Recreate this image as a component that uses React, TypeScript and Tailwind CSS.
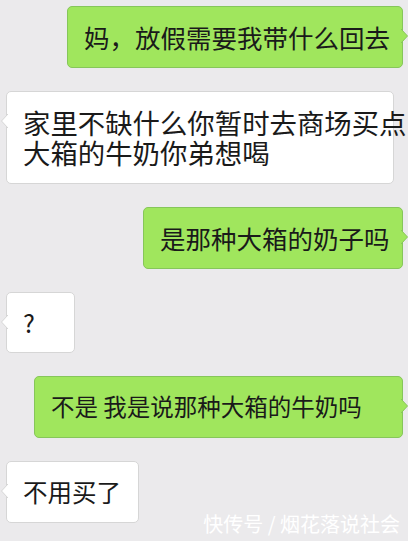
import React from "react";

type Side = "left" | "right";

const Tail = ({ side }: { side: Side }) => {
  return (
    <svg
      width="7"
      height="14"
      viewBox="0 0 7 14"
      className={
        side === "right"
          ? "absolute top-[22px] right-[-6px]"
          : "absolute top-[22px] left-[-6px]"
      }
    >
      {side === "right" ? (
        <path d="M0 0 L6.5 7 L0 14" fill="#a0e65d" stroke="#86c65a" strokeWidth="1" />
      ) : (
        <path d="M7 0 L0.5 7 L7 14" fill="#ffffff" stroke="#d6d6d6" strokeWidth="1" />
      )}
    </svg>
  );
};

const Bubble = ({
  side,
  className,
  children,
}: {
  side: Side;
  className: string;
  children: React.ReactNode;
}) => {
  const base =
    side === "right"
      ? "self-end mr-[5px] bg-[#a0e65d] border-[#86c65a]"
      : "self-start ml-[6px] bg-white border-[#d6d6d6]";
  return (
    <div
      className={`relative whitespace-nowrap rounded-[5px] border pl-4 text-[#1a1a1a] ${base} ${className}`}
    >
      {children}
      <Tail side={side} />
    </div>
  );
};

const App = () => {
  return (
    <div
      className="relative h-[541px] w-[408px] overflow-hidden bg-[#ebeaec]"
      style={{ fontFamily: '"Noto Sans CJK SC", "Noto Sans", sans-serif' }}
    >
      <div className="flex flex-col gap-[23px] pt-[6px]">
        <Bubble side="right" className="flex h-[62px] w-[336px] items-center text-[25.5px]">
          妈，放假需要我带什么回去
        </Bubble>
        <Bubble side="left" className="w-[388px] pt-[15px] pb-[16px] text-[27.4px] leading-[30px]">
          <div>家里不缺什么你暂时去商场买点</div>
          <div>大箱的牛奶你弟想喝</div>
        </Bubble>
        <Bubble side="right" className="flex h-[62px] w-[260px] items-center text-[25.5px]">
          是那种大箱的奶子吗
        </Bubble>
        <Bubble side="left" className="flex h-[61px] w-[69px] items-center text-[25px]">
          ?
        </Bubble>
        <Bubble side="right" className="flex h-[62px] w-[369px] items-center text-[23.5px]">
          不是 我是说那种大箱的牛奶吗
        </Bubble>
        <Bubble side="left" className="flex h-[62px] w-[133px] items-center text-[24.5px]">
          不用买了
        </Bubble>
      </div>
      <div className="absolute right-[8px] bottom-[2px] text-[20px] text-white">
        快传号 / 烟花落说社会
      </div>
    </div>
  );
};

export default App;
